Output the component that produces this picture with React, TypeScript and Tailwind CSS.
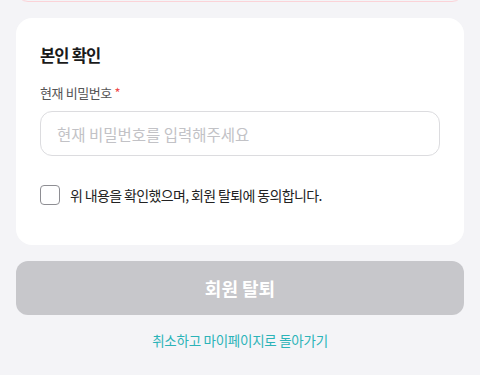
import { useState } from 'react'

export default function App() {
  const [password, setPassword] = useState('')
  const [agreed, setAgreed] = useState(false)

  return (
    <div
      className="min-h-[375px] w-full bg-[#f4f4f7] px-4 pb-6 overflow-hidden"
      style={{ fontFamily: '"Noto Sans CJK KR", "Noto Sans", sans-serif' }}
    >
      {/* previous warning box, mostly scrolled off */}
      <div className="-mt-[40px] h-[42px] rounded-xl border border-[#fbd3d8] bg-[#f4f4f7]" />

      <div className="mt-4 rounded-2xl bg-white px-6 pt-[25px] pb-[40px]">
        <h2 className="text-[16.5px] font-bold leading-[24px] tracking-[-0.05em] text-[#1a1a1a]">본인 확인</h2>

        <label className="mt-[16px] block text-[13px] leading-[20px] tracking-[-0.03em] text-[#555]">
          현재 비밀번호 <span className="text-[#f04a4a]">*</span>
        </label>
        <input
          type="password"
          value={password}
          onChange={e => setPassword(e.target.value)}
          placeholder="현재 비밀번호를 입력해주세요"
          className="mt-[8px] h-[45px] w-full rounded-xl border border-[#dcdcdf] px-4 text-[15.5px] text-[#222] placeholder:text-[#c2c2c6] focus:outline-none"
        />

        <label className="mt-[29px] flex items-center gap-[10px] cursor-pointer">
          <input
            type="checkbox"
            checked={agreed}
            onChange={e => setAgreed(e.target.checked)}
            className="peer sr-only"
          />
          <span className="h-5 w-5 rounded-[4px] border-[1.5px] border-[#8e8e93] bg-white" />
          <span className="text-[14px] leading-[20px] tracking-[-0.045em] text-[#222]">위 내용을 확인했으며, 회원 탈퇴에 동의합니다.</span>
        </label>
      </div>

      <button
        disabled={!agreed}
        className="mt-[16px] h-[54px] w-full rounded-xl bg-[#c7c7cb] text-[18px] font-bold text-white"
      >
        회원 탈퇴
      </button>

      <div className="mt-[12px] text-center">
        <button className="text-[13.5px] leading-[20px] tracking-[-0.02em] text-[#2bb3b8]">취소하고 마이페이지로 돌아가기</button>
      </div>
    </div>
  )
}
